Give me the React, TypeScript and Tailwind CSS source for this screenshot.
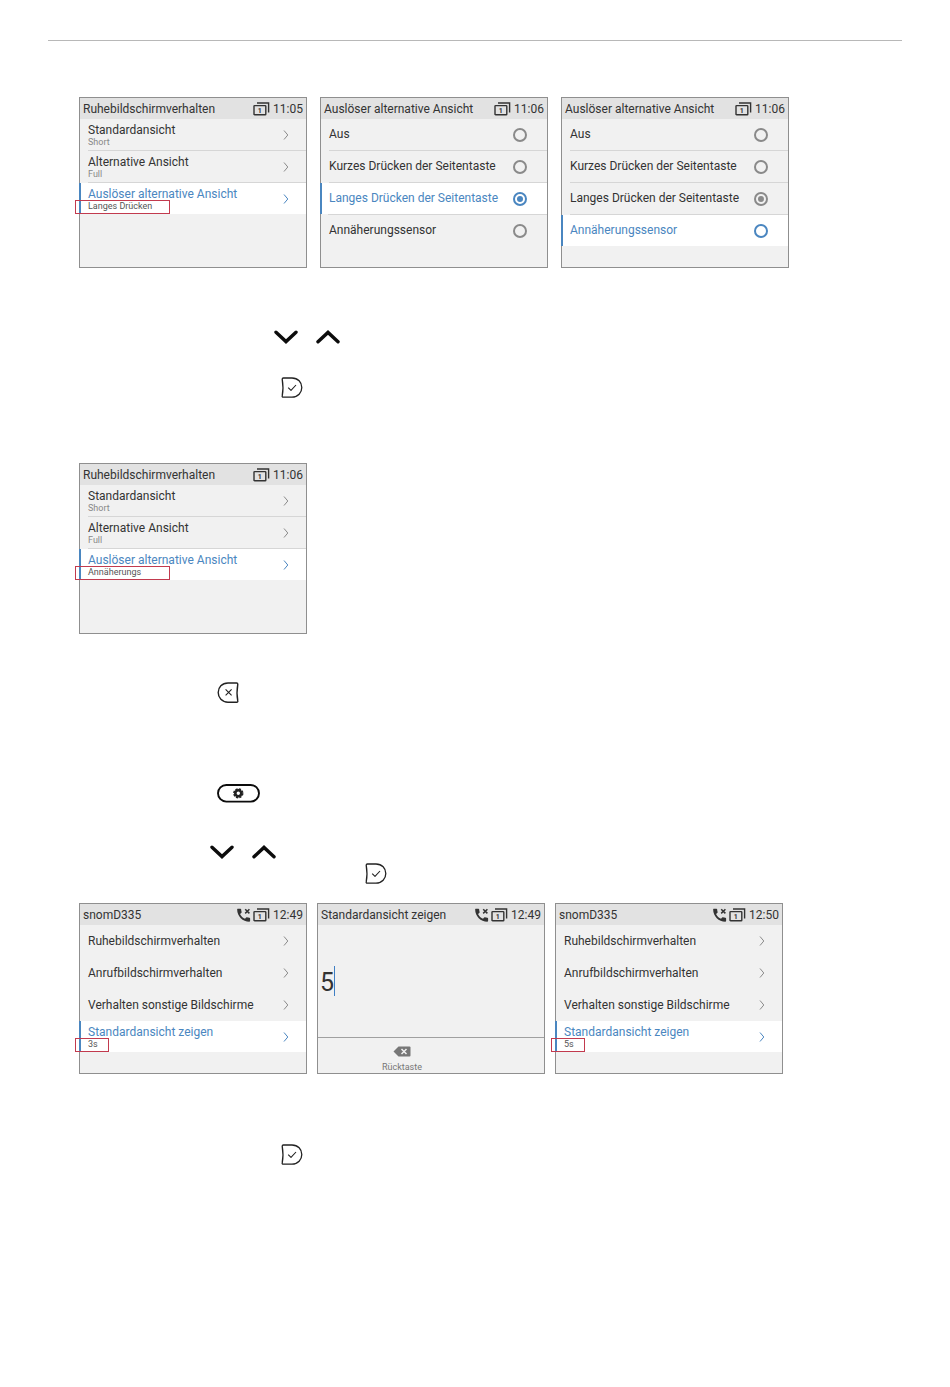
import React from "react";
import clsx from "clsx";

type Item = { title: string; sub?: string; active?: boolean; marked?: boolean };

function ChevronDown() {
  return (
    <svg width="24" height="14" viewBox="0 0 24 14" fill="none" stroke="#0c0c0c" strokeWidth="3.4" strokeLinecap="round" role="img" aria-label="Nach unten">
      <path d="M2 2.2 12 11.6 22 2.2" />
    </svg>
  );
}

function ChevronUp() {
  return (
    <svg width="24" height="14" viewBox="0 0 24 14" fill="none" stroke="#0c0c0c" strokeWidth="3.4" strokeLinecap="round" role="img" aria-label="Nach oben">
      <path d="M2 11.8 12 2.4 22 11.8" />
    </svg>
  );
}

function OkKey() {
  return (
    <svg width="22" height="22" viewBox="0 0 22 22" fill="none" stroke="#222" strokeWidth="1.3" strokeLinejoin="round" role="img" aria-label="Bestätigen">
      <path d="M1.2 2.2C1.2 1.4 1.6 1 2.4 1H11C17 1 20.8 5.3 20.8 10.5S17 20.2 11 20.2H2.2C1.4 20.2 1 19.8 1.2 19C2.2 14 2.2 8 1.2 2.2Z" />
      <path d="M7.2 10.6 10 13.4 15 8" strokeWidth="1.1" />
    </svg>
  );
}

function CancelKey() {
  return (
    <svg width="22" height="22" viewBox="0 0 22 22" fill="none" stroke="#222" strokeWidth="1.4" strokeLinejoin="round" role="img" aria-label="Abbrechen">
      <path d="M20.8 2.2C20.8 1.4 20.4 1 19.6 1H11C5 1 1.2 5.3 1.2 10.5S5 20.2 11 20.2H19.8C20.6 20.2 21 19.8 20.8 19C19.8 14 19.8 8 20.8 2.2Z" />
      <path d="M8.6 7.3 14.6 13.3M14.6 7.3 8.6 13.3" strokeWidth="1.1" />
    </svg>
  );
}

function SettingsKey() {
  return (
    <svg width="43" height="19" viewBox="0 0 43 19" fill="none" stroke="#0c0c0c" role="img" aria-label="Einstellungen">
      <rect x="1" y="1" width="41" height="16.6" rx="8.3" strokeWidth="1.9" />
      <circle cx="21.3" cy="9.3" r="3" strokeWidth="2.6" stroke="#222" />
      <circle cx="21.3" cy="9.3" r="4.4" strokeWidth="1.6" stroke="#222" strokeDasharray="2.2 1.255" />
    </svg>
  );
}

function LineIcon() {
  return (
    <svg width="17" height="14" viewBox="0 0 17 14" fill="none" stroke="#333" strokeWidth="1.4" aria-hidden="true">
      <path d="M4 1H15.6V10.4" />
      <rect x="1" y="3.6" width="11.8" height="9.2" rx="0.6" />
      <text x="6.8" y="11" fontSize="7" fontFamily="Roboto" fontWeight="700" textAnchor="middle" fill="#333" stroke="none">1</text>
    </svg>
  );
}

function MissedIcon() {
  return (
    <svg width="14" height="14" viewBox="0 0 14 14" aria-hidden="true">
      <path
        transform="translate(-2 -1.4) scale(.72)"
        fill="#333"
        d="M20 15.4c-1.2 0-2.4-.2-3.5-.6a1 1 0 0 0-1 .3l-1.6 1.9c-2.8-1.3-5.5-3.9-6.9-6.8l2-1.7c.3-.3.3-.7.2-1-.4-1.1-.6-2.300-.6-3.500 0-.6-.4-1-1-1H4.200C3.600 3 3 3.200 3 4c0 9.300 7.700 17 17 17 .7 0 1-.6 1-1.200v-3.400c0-.6-.4-1-1-1z"
      />
      <path d="M8.2 1.2 12.4 5.4M12.4 1.2 8.2 5.4" stroke="#333" strokeWidth="1.500" />
    </svg>
  );
}

function Screen({ title, time, missed, children }: { title: string; time: string; missed?: boolean; children: React.ReactNode }) {
  return (
    <section className="flex h-[171px] w-[228px] shrink-0 flex-col border border-[#8f8f8f] bg-[#f1f1f1] text-[#333]">
      <header className="flex h-[21px] shrink-0 items-center bg-[#e2e2e2] px-[3px]">
        <h2 className="mr-auto whitespace-nowrap text-[12px] leading-5">{title}</h2>
        {missed && <MissedIcon />}
        <span className="ml-[2px]">
          <LineIcon />
        </span>
        <span className="ml-[3px] text-[12px] leading-5">{time}</span>
      </header>
      {children}
    </section>
  );
}

function MenuScreen({ title, time, missed, items, lines }: { title: string; time: string; missed?: boolean; items: Item[]; lines?: boolean }) {
  return (
    <Screen title={title} time={time} missed={missed}>
      <ul>
        {items.map((item, i) => (
          <li key={item.title} className={clsx("relative h-8", item.active && "-ml-px")}>
            <button
              type="button"
              className={clsx(
                "flex w-full items-center pr-[17px] text-left",
                item.active ? "h-[31px] border-l-2 border-[#4a86c0] bg-white pl-[7px] text-[#4a86c0]" : "h-8 pl-2",
              )}
            >
              <span className="flex flex-1 flex-col">
                <span className="whitespace-nowrap text-[12px] leading-[15px]">{item.title}</span>
                {item.sub && (
                  <span className={clsx("text-[9px] leading-[9px]", item.active ? "text-[#555]" : "text-[#888]")}>{item.sub}</span>
                )}
              </span>
              <svg width="6" height="10" viewBox="0 0 6 10" fill="none" stroke={item.active ? "#4a86c0" : "#8a8a8a"} aria-hidden="true">
                <path d="M1 0.5 4.8 5 1 9.5" />
              </svg>
            </button>
            {lines && i < 2 && <div className="absolute bottom-0 left-2 right-0 h-px bg-[#d6d6d6]" />}
            {item.marked && (
              <div
                className={clsx(
                  "absolute -left-1 top-[17px] h-[14px] border border-[#c23a4e]",
                  lines ? "w-[95px]" : "w-[34px]",
                )}
              />
            )}
          </li>
        ))}
      </ul>
    </Screen>
  );
}

const triggers = ["Aus", "Kurzes Drücken der Seitentaste", "Langes Drücken der Seitentaste", "Annäherungssensor"];

function RadioScreen({ name, active }: { name: string; active: number }) {
  return (
    <Screen title="Auslöser alternative Ansicht" time="11:06">
      {triggers.map((label, i) => (
        <div key={label} className={clsx("relative h-8 shrink-0", i === active && "-ml-px")}>
          <label
            className={clsx(
              "flex h-[31px] items-center pr-5",
              i === active ? "border-l-2 border-[#4a86c0] bg-white pl-[7px] text-[#4a86c0]" : "pl-2",
            )}
          >
            <span className="flex-1 whitespace-nowrap text-[12px] leading-[15px]">{label}</span>
            <input
              type="radio"
              name={name}
              defaultChecked={i === 2}
              className={clsx(
                "size-[14px] shrink-0 appearance-none rounded-full border-2 bg-clip-content p-[2px]",
                i === active ? "border-[#4a86c0] checked:bg-[#4a86c0]" : "border-[#8a8a8a] checked:bg-[#8a8a8a]",
              )}
            />
          </label>
          {i < 3 && <div className="absolute bottom-0 left-2 right-0 h-px bg-[#d6d6d6]" />}
        </div>
      ))}
    </Screen>
  );
}

function idleItems(sub: string): Item[] {
  return [
    { title: "Standardansicht", sub: "Short" },
    { title: "Alternative Ansicht", sub: "Full" },
    { title: "Auslöser alternative Ansicht", sub, active: true, marked: true },
  ];
}

function displayItems(sub: string): Item[] {
  return [
    { title: "Ruhebildschirmverhalten" },
    { title: "Anrufbildschirmverhalten" },
    { title: "Verhalten sonstige Bildschirme" },
    { title: "Standardansicht zeigen", sub, active: true, marked: true },
  ];
}

export default function App() {
  return (
    <div className="min-h-screen bg-white pt-10 font-['Roboto',sans-serif]">
      <hr className="mx-12 border-[#b8b8b8]" />
      <main className="px-[79px] pt-14">
        <div className="flex gap-[13px]">
          <MenuScreen title="Ruhebildschirmverhalten" time="11:05" items={idleItems("Langes Drücken")} lines />
          <RadioScreen name="trigger-before" active={2} />
          <RadioScreen name="trigger-after" active={3} />
        </div>

        <div className="mt-[62px] flex gap-[18px] pl-[195px]">
          <ChevronDown />
          <ChevronUp />
        </div>
        <div className="mt-[33px] pl-[202px]">
          <OkKey />
        </div>

        <div className="mt-16">
          <MenuScreen title="Ruhebildschirmverhalten" time="11:06" items={idleItems("Annäherungs")} lines />
        </div>

        <div className="mt-12 pl-[138px]">
          <CancelKey />
        </div>
        <div className="mt-20 pl-[138px]">
          <SettingsKey />
        </div>
        <div className="mt-[42px] flex gap-[18px] pl-[131px]">
          <ChevronDown />
          <ChevronUp />
        </div>
        <div className="mt-1 pl-[286px]">
          <OkKey />
        </div>

        <div className="mt-[18px] flex gap-[10px]">
          <MenuScreen title="snomD335" time="12:49" missed items={displayItems("3s")} />
          <Screen title="Standardansicht zeigen" time="12:49" missed>
            <div className="flex flex-1 items-center pl-[2px]">
              <input
                type="text"
                aria-label="Sekunden"
                defaultValue="5"
                className="h-[30px] w-[15px] border-r border-[#3f7fc4] pt-[3px] text-[25px] leading-[26px] outline-none"
              />
            </div>
            <div className="h-9 border-t border-[#a0a0a0] pl-14">
              <button type="button" className="flex h-full w-14 flex-col items-center pt-2 text-[9px] leading-[10px] text-[#777]">
                <svg width="18" height="11" viewBox="0 0 18 11" aria-hidden="true">
                  <path d="M5.5 0.5H16.5Q17.5 0.5 17.5 1.5V9.5Q17.5 10.5 16.5 10.5H5.5L0.5 5.5Z" fill="#777" />
                  <path d="M8.5 3 13.5 8M13.5 3 8.5 8" stroke="#f1f1f1" strokeWidth="1.5" />
                </svg>
                <span className="mt-[5px]">Rücktaste</span>
              </button>
            </div>
          </Screen>
          <MenuScreen title="snomD335" time="12:50" missed items={displayItems("5s")} />
        </div>

        <div className="mt-[70px] pl-[202px]">
          <OkKey />
        </div>
      </main>
    </div>
  );
}
